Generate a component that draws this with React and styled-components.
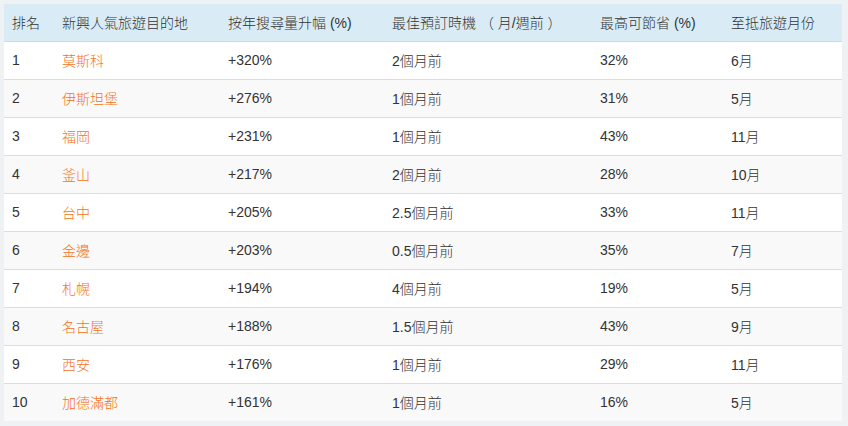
import React from "react";
import styled, { createGlobalStyle } from "styled-components";

const rows = [
  ["1", "莫斯科", "+320%", "2個月前", "32%", "6月"],
  ["2", "伊斯坦堡", "+276%", "1個月前", "31%", "5月"],
  ["3", "福岡", "+231%", "1個月前", "43%", "11月"],
  ["4", "釜山", "+217%", "2個月前", "28%", "10月"],
  ["5", "台中", "+205%", "2.5個月前", "33%", "11月"],
  ["6", "金邊", "+203%", "0.5個月前", "35%", "7月"],
  ["7", "札幌", "+194%", "4個月前", "19%", "5月"],
  ["8", "名古屋", "+188%", "1.5個月前", "43%", "9月"],
  ["9", "西安", "+176%", "1個月前", "29%", "11月"],
  ["10", "加德滿都", "+161%", "1個月前", "16%", "5月"],
];

const headers = ["排名", "新興人氣旅遊目的地", "按年搜尋量升幅 (%)", "最佳預訂時機 （ 月/週前 ）", "最高可節省 (%)", "至抵旅遊月份"];
const widths = [50, 166, 164, 208, 131, 119];

const Global = createGlobalStyle`
  html, body { margin: 0; background: #eef2f5; }
  body {
    font-family: "Liberation Sans", Arial, "Noto Sans CJK TC", sans-serif;
    font-size: 14px;
    font-weight: 300;
    color: #333;
  }
`;

const Page = styled.div`
  padding: 4px 6px 5px 4px;
`;

const Table = styled.table`
  width: 838px;
  border-collapse: collapse;
  table-layout: fixed;
  background: #fff;
`;

const Head = styled.tr`
  background: #d9ecf5;
  height: 37px;
`;

const Th = styled.th`
  text-align: left;
  font-weight: 300;
  padding: 0 8px;
  color: #333;
  border-bottom: 1px solid #c8dbe6;
  white-space: nowrap;
`;

const Row = styled.tr`
  height: 38px;
  background: ${(p) => (p.$odd ? "#f9f9f9" : "#fff")};
  border-top: 1px solid #dddddd;
`;

const Td = styled.td`
  padding: 0 8px;
  white-space: nowrap;
  color: ${(p) => (p.$link ? "#f47321" : "#333")};
`;

export default function App() {
  return (
    <Page>
      <Global />
      <Table>
        <colgroup>
          {widths.map((w, i) => (
            <col key={i} style={{ width: w }} />
          ))}
        </colgroup>
        <thead>
          <Head>
            {headers.map((h) => (
              <Th key={h}>{h}</Th>
            ))}
          </Head>
        </thead>
        <tbody>
          {rows.map((r, i) => (
            <Row key={r[0]} $odd={i % 2 === 1}>
              {r.map((c, j) => (
                <Td key={j} $link={j === 1}>{c}</Td>
              ))}
            </Row>
          ))}
        </tbody>
      </Table>
    </Page>
  );
}
